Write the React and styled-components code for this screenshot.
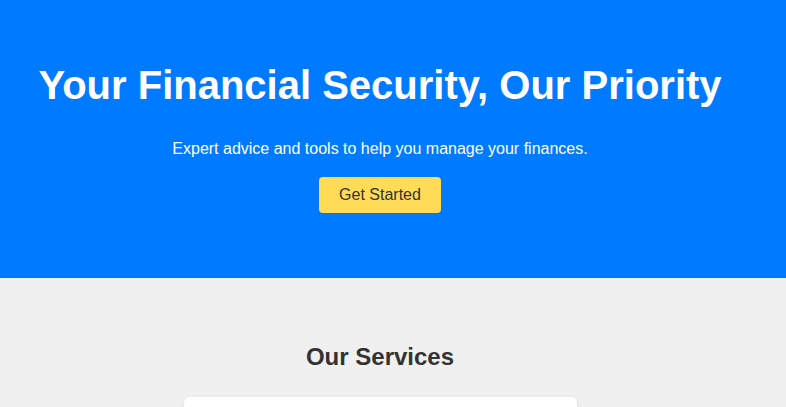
import React from "react";
import styled, { createGlobalStyle } from "styled-components";

const GlobalStyle = createGlobalStyle`
  body {
    margin: 0;
    font-family: "Liberation Sans", Arial, sans-serif;
    background: #f0f0f0;
  }
`;

const Hero = styled.header`
  background: #007bff;
  color: white;
  height: 278px;
  box-sizing: border-box;
  padding: 37px 26px 0 0;
  display: flex;
  flex-direction: column;
  align-items: center;
  text-align: center;
`;

const Title = styled.h1`
  font-size: 40px;
  margin: 26px 0 0;
`;

const Subtitle = styled.p`
  font-size: 16px;
  margin: 32px 0 0;
`;

const CtaButton = styled.button`
  margin-top: 19px;
  background: #ffdc57;
  color: #333;
  border: none;
  border-radius: 4px;
  padding: 0 20px;
  height: 36px;
  font-family: inherit;
  font-size: 16px;
  cursor: pointer;
`;

const Services = styled.section`
  padding: 60px 26px 0 0;
  display: flex;
  flex-direction: column;
  align-items: center;
`;

const SectionTitle = styled.h2`
  font-size: 24px;
  color: #333;
  margin: 5px 0 0;
`;

const ServiceGrid = styled.div`
  margin-top: 26px;
  width: 393px;
`;

const ServiceCard = styled.div`
  background: white;
  border-radius: 6px;
  box-shadow: 0 2px 5px rgba(0, 0, 0, 0.1);
  height: 120px;
`;

export default function App() {
  return (
    <>
      <GlobalStyle />
      <Hero>
        <Title>Your Financial Security, Our Priority</Title>
        <Subtitle>Expert advice and tools to help you manage your finances.</Subtitle>
        <CtaButton>Get Started</CtaButton>
      </Hero>
      <Services>
        <SectionTitle>Our Services</SectionTitle>
        <ServiceGrid>
          <ServiceCard />
        </ServiceGrid>
      </Services>
    </>
  );
}
